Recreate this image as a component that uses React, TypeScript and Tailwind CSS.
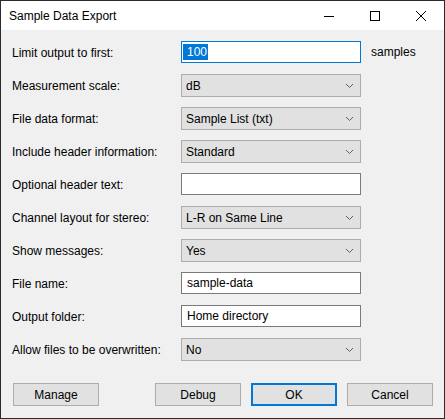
import React from "react";

type Row = {
  label: string;
  kind: "text" | "select";
  value: string;
  focused?: boolean;
};

const rows: Row[] = [
  { label: "Limit output to first:", kind: "text", value: "100", focused: true },
  { label: "Measurement scale:", kind: "select", value: "dB" },
  { label: "File data format:", kind: "select", value: "Sample List (txt)" },
  { label: "Include header information:", kind: "select", value: "Standard" },
  { label: "Optional header text:", kind: "text", value: "" },
  { label: "Channel layout for stereo:", kind: "select", value: "L-R on Same Line" },
  { label: "Show messages:", kind: "select", value: "Yes" },
  { label: "File name:", kind: "text", value: "sample-data" },
  { label: "Output folder:", kind: "text", value: "Home directory" },
  { label: "Allow files to be overwritten:", kind: "select", value: "No" },
];

const Chevron = () => (
  <svg width="9" height="6" viewBox="0 0 9 6" className="shrink-0">
    <polyline points="1,1 4.5,4.5 8,1" fill="none" stroke="#606060" strokeWidth="1" />
  </svg>
);

const Field = ({ row }: { row: Row }) => {
  if (row.kind === "select") {
    return (
      <div className="w-[180px] h-[23px] bg-[#e1e1e1] border border-[#adadad] flex items-center pl-[4px] pr-[6px] justify-between">
        <span>{row.value}</span>
        <Chevron />
      </div>
    );
  }
  return (
    <div
      className={`w-[180px] h-[22px] bg-white border flex items-center pl-[1px] ${
        row.focused ? "border-[#0078d7]" : "border-[#7a7a7a]"
      }`}
    >
      {row.focused ? (
        <span className="bg-[#0078d7] text-white pl-[4px] pr-[1px] leading-[16px]">{row.value}</span>
      ) : (
        <span className="pl-[4px]">{row.value}</span>
      )}
    </div>
  );
};

const Button = ({ label, primary }: { label: string; primary?: boolean }) => (
  <div
    className={`w-[86px] h-[23px] bg-[#e1e1e1] flex items-center justify-center ${
      primary ? "border-2 border-[#0078d7]" : "border border-[#adadad]"
    }`}
  >
    {label}
  </div>
);

export default function App() {
  return (
    <div
      className="w-[445px] h-[419px] border border-[#2b2b2b] flex flex-col text-[12px] text-black bg-[#f0f0f0]"
      style={{ fontFamily: '"Liberation Sans", Arial, sans-serif' }}
    >
      <div className="h-[29px] bg-white flex items-center justify-between shrink-0">
        <span className="pl-[8px]">Sample Data Export</span>
        <div className="flex h-full">
          <div className="w-[46px] h-full flex items-center justify-center">
            <svg width="10" height="10" viewBox="0 0 10 10">
              <line x1="0" y1="5.5" x2="10" y2="5.5" stroke="#000" strokeWidth="1" />
            </svg>
          </div>
          <div className="w-[46px] h-full flex items-center justify-center">
            <svg width="10" height="10" viewBox="0 0 10 10">
              <rect x="0.5" y="0.5" width="9" height="9" fill="none" stroke="#000" strokeWidth="1" />
            </svg>
          </div>
          <div className="w-[46px] h-full flex items-center justify-center">
            <svg width="10" height="10" viewBox="0 0 10 10">
              <path d="M0 0 L10 10 M10 0 L0 10" stroke="#000" strokeWidth="1" />
            </svg>
          </div>
        </div>
      </div>

      <div className="flex-1 flex flex-col pt-[11px] px-[11px]">
        <div className="flex flex-col gap-[10px]">
          {rows.map((row) => (
            <div key={row.label} className="flex h-[23px] items-start">
              <div className="w-[169px] h-[23px] flex items-center">{row.label}</div>
              <Field row={row} />
              {row.focused && (
                <div className="h-[22px] flex items-center pl-[10px]">samples</div>
              )}
            </div>
          ))}
        </div>

        <div className="flex justify-between mt-[22px] pl-[1px]">
          <Button label="Manage" />
          <div className="flex gap-[10px]">
            <Button label="Debug" />
            <Button label="OK" primary />
            <Button label="Cancel" />
          </div>
        </div>
      </div>
    </div>
  );
}
